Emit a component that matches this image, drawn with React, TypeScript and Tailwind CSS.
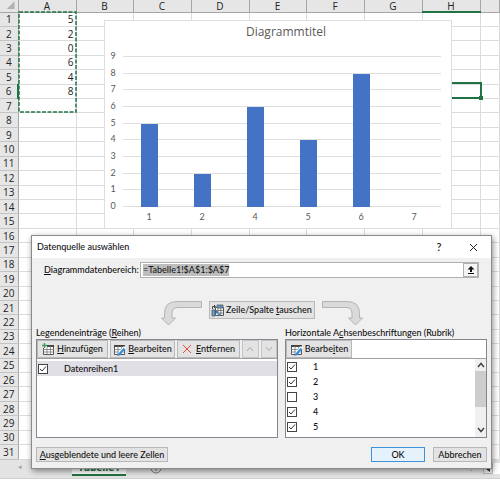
import type { ReactNode } from "react";

const columns = [
  { name: "A", width: "w-[58px]" },
  { name: "B", width: "w-[57px]" },
  { name: "C", width: "w-[58px]" },
  { name: "D", width: "w-[58px]" },
  { name: "E", width: "w-[57px]" },
  { name: "F", width: "w-[58px]" },
  { name: "G", width: "w-[58px]" },
  { name: "H", width: "w-[58px]" },
  { name: "", width: "" },
];

const values = [5, 2, 0, 6, 4, 8];
const rows = Array.from({ length: 31 }, (_, i) => i + 1);

const bars = [
  { label: "1", value: 5 },
  { label: "2", value: 2 },
  { label: "4", value: 6 },
  { label: "5", value: 4 },
  { label: "6", value: 8 },
  { label: "7", value: 0 },
];

const categories = [
  { label: "1", checked: true },
  { label: "2", checked: true },
  { label: "3", checked: false },
  { label: "4", checked: true },
  { label: "5", checked: true },
];

function Sheet() {
  return (
    <table className="h-[460px] w-full table-fixed border-collapse text-[10px] leading-[10px] text-[#222]">
      <colgroup>
        <col className="w-[18px]" />
        {columns.map((c, i) => (
          <col key={i} className={c.width} />
        ))}
      </colgroup>
      <thead>
        <tr className="h-[12px] bg-[#e6e6e6]">
          <th className="border-r border-b border-[#a6a6a6] p-0">
            <svg viewBox="0 0 18 10" className="h-[10px] w-full" aria-hidden="true">
              <path d="M15 0v8H7z" fill="#b2b2b2" />
            </svg>
          </th>
          {columns.map((c, i) => (
            <th
              key={i}
              scope="col"
              className={
                c.name === "H"
                  ? "border-r border-b-2 border-r-[#a6a6a6] border-b-[#217346] p-0 font-medium"
                  : "border-r border-b border-[#a6a6a6] p-0 font-medium"
              }
            >
              {c.name}
            </th>
          ))}
        </tr>
      </thead>
      <tbody>
        {rows.map((row) => (
          <tr key={row}>
            <th
              scope="row"
              className={
                row === 6
                  ? "border-r-2 border-b border-r-[#217346] border-b-[#c4c4c4] bg-[#e6e6e6] p-0 font-normal"
                  : "border-r border-b border-r-[#a6a6a6] border-b-[#c4c4c4] bg-[#e6e6e6] p-0 font-normal"
              }
            >
              {row}
            </th>
            {columns.map((c, i) => (
              <td key={i} className="border-r border-b border-[#dcdcdc] p-0 pr-0.5 text-right">
                {c.name === "A" ? values[row - 1] : null}
              </td>
            ))}
          </tr>
        ))}
      </tbody>
    </table>
  );
}

function Chart() {
  const base = 186;
  const step = 150 / 9;
  return (
    <figure className="absolute top-5 left-[104px] w-[348px] border border-[#dedede] bg-white">
      <svg viewBox="0 0 346 207" className="block w-full" role="img" aria-label="Diagrammtitel">
        <text x="181" y="15" textAnchor="middle" fontSize="12" fill="#595959">
          Diagrammtitel
        </text>
        {Array.from({ length: 10 }, (_, n) => (
          <g key={n}>
            <line
              x1="18"
              x2="336"
              y1={Math.round(base - n * step) - 0.5}
              y2={Math.round(base - n * step) - 0.5}
              stroke="#dedede"
            />
            <text
              x="8"
              y={Math.round(base - n * step) + 2}
              textAnchor="middle"
              className="font-[Lato]"
              fontSize="9"
              fill="#595959"
            >
              {n}
            </text>
          </g>
        ))}
        {bars.map((bar, i) => (
          <g key={bar.label}>
            <rect
              x={36 + i * 53}
              y={base - Math.round(bar.value * step)}
              width="17"
              height={Math.round(bar.value * step)}
              fill="#4472c4"
            />
            <text
              x={44 + i * 53}
              y="199"
              textAnchor="middle"
              className="font-[Lato]"
              fontSize="9"
              fill="#595959"
            >
              {bar.label}
            </text>
          </g>
        ))}
      </svg>
    </figure>
  );
}

function Button({ children, className = "" }: { children: ReactNode; className?: string }) {
  return (
    <button
      type="button"
      className={`flex items-center justify-center gap-0.5 border border-[#b8b8b8] bg-[#e3e3e3] whitespace-nowrap ${className}`}
    >
      {children}
    </button>
  );
}

function CheckBox({ label, checked, className = "" }: { label: string; checked: boolean; className?: string }) {
  return (
    <label className={`flex h-[15px] items-center ${className}`}>
      <span className="relative flex size-[10px]">
        <input
          type="checkbox"
          defaultChecked={checked}
          className="peer size-[10px] appearance-none border border-[#444] bg-white"
        />
        <svg
          viewBox="0 0 10 10"
          className="pointer-events-none absolute inset-0 hidden size-[10px] peer-checked:block"
          fill="none"
          stroke="#333"
          aria-hidden="true"
        >
          <path d="M2 5l2 2 4-4.500" />
        </svg>
      </span>
      <span className="ml-4">{label}</span>
    </label>
  );
}

function TableIcon({ kind }: { kind: "add" | "edit" }) {
  return (
    <svg viewBox="0 0 13 13" className="size-[13px] shrink-0" fill="none" aria-hidden="true">
      <path d="M1.500 2.500h10v9h-10z" fill="#fff" stroke="#555" />
      <path d="M1 3h11" stroke="#444" strokeWidth="2" />
      <path d="M1 6.500h11M1 9h11M5 3v8M8.500 3v8" stroke="#777" strokeWidth="0.800" />
      {kind === "add" ? (
        <>
          <path d="M0 0h5v5H0z" fill="#e3e3e3" />
          <path d="M2.500 0v5M0 2.500h5" stroke="#3c9a62" strokeWidth="1.300" />
        </>
      ) : (
        <>
          <path d="M5 12l1-3.500L11 3l2 2-5 6z" fill="#fff" />
          <path d="M6 11.500L11.500 5.500" stroke="#2d8fdd" strokeWidth="2.200" />
          <path d="M4.500 13l.5-2.500 2 1.700z" fill="#2d8fdd" />
        </>
      )}
    </svg>
  );
}

function SwapIcon() {
  return (
    <svg viewBox="0 0 13 13" className="size-[13px] shrink-0" fill="none" aria-hidden="true">
      <path d="M4.500 3.500h8v8h-8z" fill="#fff" stroke="#555" />
      <path d="M6 1h6v3H6z" fill="#5ba3dc" stroke="#555" strokeWidth="0.800" />
      <path d="M1 6h3v6H1z" fill="#5ba3dc" stroke="#555" strokeWidth="0.800" />
      <path d="M4 6.500h8M4 9h8M7 4v8M9.800 1v11" stroke="#666" strokeWidth="0.800" />
      <path d="M5 7h2v2H5zM7.500 9.500h2v2h-2z" fill="#2d7fc7" />
      <path d="M1.500 5V2.500H4M3 1l1.500 1.500L3 4" stroke="#444" />
    </svg>
  );
}

function CurvedArrow({ className = "" }: { className?: string }) {
  return (
    <svg viewBox="0 0 42 26" className={`h-[26px] w-[42px] ${className}`} aria-hidden="true">
      <path
        d="M41.500 1.500v6H18q-6 0-6 6v4.500h3.500L8.500 25 1.500 18h3v-4.500Q4.500 1.500 17 1.500z"
        fill="#dadada"
        stroke="#b4b4b4"
      />
    </svg>
  );
}

function Chevron({ down = false, className = "" }: { down?: boolean; className?: string }) {
  return (
    <svg viewBox="0 0 8 6" className={`h-[6px] w-[8px] ${className}`} fill="none" stroke="currentColor" aria-hidden="true">
      <path d={down ? "M1 1l3 3.500L7 1" : "M1 5l3-3.500L7 5"} />
    </svg>
  );
}

function Dialog() {
  return (
    <div
      role="dialog"
      aria-labelledby="dialog-title"
      className="absolute top-[235px] right-2 left-[31px] border border-[#8a8a8a] bg-[#f0f0f0] font-[Lato,sans-serif] text-[9px] leading-[12px] font-medium text-[#111] shadow-[1px_2px_6px_rgba(0,0,0,0.450)]"
    >
      {/* Title bar */}
      <div className="flex h-[22px] items-center bg-white pl-[5px]">
        <h1 id="dialog-title" className="flex-1">
          Datenquelle auswählen
        </h1>
        <button type="button" aria-label="Hilfe" className="w-8 text-[11px] font-medium">
          ?
        </button>
        <button type="button" aria-label="Schließen" className="flex w-9 justify-center">
          <svg viewBox="0 0 9 9" className="size-[9px]" stroke="#222" aria-hidden="true">
            <path d="M1 1l7 7M8 1L1 8" />
          </svg>
        </button>
      </div>

      <div className="px-1 pt-1">
        {/* Data range */}
        <div className="flex items-center pr-2 pl-2">
          <label htmlFor="range" className="w-24">
            <u>D</u>iagrammdatenbereich:
          </label>
          <div className="flex h-4 flex-1 border border-[#b0b0b0] bg-white">
            <input
              id="range"
              autoFocus
              onFocus={(e) => e.target.select()}
              defaultValue="=Tabelle1!$A$1:$A$7"
              className="min-w-0 flex-1 px-0.5 outline-none selection:bg-[#bdbdbd] selection:text-[#1a1a1a]"
            />
            <button
              type="button"
              aria-label="Bereich auswählen"
              className="flex w-[15px] items-center justify-center border border-[#b0b0b0] bg-[#f4f4f4]"
            >
              <svg viewBox="0 0 8 8" className="size-2" aria-hidden="true">
                <path d="M4 0l3.500 3.500H5V6H3V3.500H.5zM1 7h6v1H1z" fill="#111" />
              </svg>
            </button>
          </div>
        </div>

        {/* Switch rows and columns */}
        <div className="mt-[22px] flex h-[27px] items-start justify-center gap-[7px]">
          <CurvedArrow />
          <Button className="mt-px h-[18px] w-[106px]">
            <SwapIcon />
            <span>
              Zeile/Spalte <u>t</u>auschen
            </span>
          </Button>
          <CurvedArrow className="-scale-x-100" />
        </div>

        <div className="flex gap-[7px]">
          {/* Series */}
          <section className="w-[242px]">
            <h2>
              Legendeneinträge (<u>R</u>eihen)
            </h2>
            <div className="h-[99px] border border-[#828790] bg-white">
              <div className="flex h-[19px] gap-0.5 border-b border-[#a0a0a0] bg-[#f0f0f0]">
                <Button className="w-[71px]">
                  <TableIcon kind="add" />
                  <span>
                    <u>H</u>inzufügen
                  </span>
                </Button>
                <Button className="w-[65px]">
                  <TableIcon kind="edit" />
                  <span>
                    <u>B</u>earbeiten
                  </span>
                </Button>
                <Button className="w-[63px]">
                  <svg viewBox="0 0 10 10" className="mr-0.5 size-[10px]" stroke="#e8483f" aria-hidden="true">
                    <path d="M1 1l8 8M9 1L1 9" />
                  </svg>
                  <span>
                    <u>E</u>ntfernen
                  </span>
                </Button>
                <button
                  type="button"
                  aria-label="Nach oben"
                  className="flex flex-1 items-center justify-center border border-[#c4c4c4] bg-[#e3e3e3] text-[#a8a8a8]"
                >
                  <Chevron />
                </button>
                <button
                  type="button"
                  aria-label="Nach unten"
                  className="flex flex-1 items-center justify-center border border-[#c4c4c4] bg-[#e3e3e3] text-[#a8a8a8]"
                >
                  <Chevron down />
                </button>
              </div>
              <CheckBox label="Datenreihen1" checked className="mt-0.5 bg-[#e0dfe5] pl-px" />
            </div>
          </section>

          {/* Axis labels */}
          <section className="flex-1">
            <h2 className="whitespace-nowrap">
              Horizontale A<u>c</u>hsenbeschriftungen (Rubrik)
            </h2>
            <div className="h-[99px] border border-[#828790] bg-white">
              <div className="flex h-[19px] border-b border-[#a0a0a0]">
                <Button className="w-[66px]">
                  <TableIcon kind="edit" />
                  <span>
                    Bearbe<u>i</u>ten
                  </span>
                </Button>
              </div>
              <div className="flex h-[78px] justify-between">
                <div className="flex-1 pl-px">
                  {categories.map((c) => (
                    <CheckBox key={c.label} label={c.label} checked={c.checked} />
                  ))}
                </div>
                <div className="flex w-[11px] flex-col items-center bg-[#f0f0f0] text-[#444]">
                  <Chevron className="my-[3px] shrink-0 stroke-[1.500]" />
                  <div className="h-9 w-full bg-[#cdcdcd]" />
                  <Chevron down className="mt-auto mb-1 shrink-0 stroke-[1.500]" />
                </div>
              </div>
            </div>
          </section>
        </div>

        {/* Actions */}
        <div className="flex items-center gap-2 pt-[9px] pb-1.5">
          <Button className="mr-auto h-[15px] w-[132px]">
            <span>
              <u>A</u>usgeblendete und leere Zellen
            </span>
          </Button>
          <button type="button" className="h-[15px] w-[54px] border border-[#3c91dc] bg-[#e5f1fb]">
            OK
          </button>
          <Button className="h-[15px] w-[54px]">Abbrechen</Button>
        </div>
      </div>
    </div>
  );
}

function SheetTabs() {
  return (
    <div className="flex h-[19px] items-start border-b border-[#d0d0d0] bg-[#e3e3e3] text-[9px]">
      <div className="flex h-[15px] w-[72px] items-center gap-4 pl-[18px] text-[7px] text-[#a0a0a0]">
        <span>◂</span>
        <span>▸</span>
      </div>
      <button
        type="button"
        className="h-4 w-[54px] border-b-2 border-[#217346] bg-white text-[10px] leading-[14px] font-bold text-[#217346]"
      >
        Tabelle1
      </button>
      <button type="button" aria-label="Neues Blatt" className="ml-6 pt-0.5">
        <svg viewBox="0 0 12 12" className="size-3" fill="none" stroke="#777" aria-hidden="true">
          <circle cx="6" cy="6" r="5" />
          <path d="M6 3v6M3 6h6" />
        </svg>
      </button>
      <div className="ml-auto flex h-[14px] w-[30px] items-end">
        <span className="w-[13px] text-[#888]">:</span>
        <button
          type="button"
          aria-label="Nach links"
          className="flex h-[11px] w-[10px] items-center justify-center border border-[#bbb] bg-[#f0f0f0]"
        >
          <svg viewBox="0 0 4 6" className="h-[6px] w-1" aria-hidden="true">
            <path d="M4 0v6L0 3z" fill="#333" />
          </svg>
        </button>
        <div className="h-[11px] flex-1 bg-white" />
      </div>
    </div>
  );
}

export default function App() {
  return (
    <main className="relative overflow-hidden bg-white font-['Open_Sans','Noto_Sans',sans-serif]">
      <Sheet />
      <svg className="absolute top-[11px] left-[18px] h-[102px] w-[59px]" fill="none" aria-hidden="true">
        <rect x="1" y="1" width="57" height="100" stroke="#217346" strokeWidth="1.500" strokeDasharray="4 1.500" />
      </svg>
      <div className="absolute top-[82px] left-[422px] h-[17px] w-[60px] border-2 border-[#217346]">
        <div className="absolute -right-[3px] -bottom-[3px] size-1 bg-[#217346]" />
      </div>
      <Chart />
      <SheetTabs />
      <Dialog />
    </main>
  );
}
